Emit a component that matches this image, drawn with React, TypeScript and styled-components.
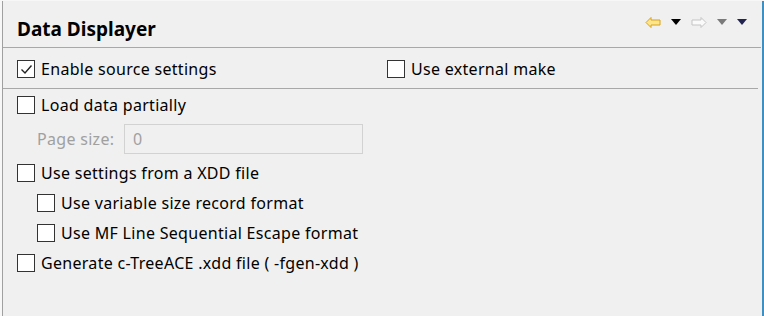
import React from 'react';
import styled, { createGlobalStyle } from 'styled-components';

const GlobalStyle = createGlobalStyle`
    html, body {
        margin: 0;
        padding: 0;
        background: #ffffff;
    }
    body {
        font-family: "Noto Sans", "Open Sans", sans-serif;
    }
`;

const Frame = styled.div`
    width: 764px;
    height: 316px;
    box-sizing: border-box;
    padding: 1px 0 0 2px;
    background: #f7f7f7;
    display: flex;
`;

const Panel = styled.div`
    flex: 1;
    display: flex;
    flex-direction: column;
    background: #f0f0f0;
    border-left: 1px solid #a0a0a0;
    border-right: 2px solid #3f8fc2;
`;

const Header = styled.div`
    height: 46px;
    display: flex;
    align-items: center;
    justify-content: space-between;
    padding: 0 14px 0 14px;
    margin-right: 1px;
    border-bottom: 1px solid #a8a8a8;
`;

const Title = styled.h1`
    margin: 0;
    font-size: 19px;
    font-weight: 700;
    color: #000;
    padding-top: 9px;
`;

const Toolbar = styled.div`
    display: flex;
    align-items: center;
    gap: 10px;
    padding-bottom: 4px;
`;

const Body = styled.div`
    padding: 0 0 0 14px;
    display: flex;
    flex-direction: column;
`;

const TopRow = styled.div`
    display: grid;
    grid-template-columns: 370px 1fr;
    height: 38px;
    padding-top: 2px;
    align-items: center;
    border-bottom: 1px solid #a8a8a8;
    margin-right: 4px;
    margin-left: -14px;
    padding-left: 14px;
`;

const List = styled.div`
    display: flex;
    flex-direction: column;
    padding-top: 1px;
`;

const Row = styled.div<{ indent?: number; h?: number }>`
    display: flex;
    align-items: center;
    height: ${({ h }) => h ?? 30}px;
    padding-left: ${({ indent }) => indent ?? 0}px;
`;

const Box = styled.span`
    width: 18px;
    height: 18px;
    box-sizing: border-box;
    border: 1px solid #333333;
    background: #ffffff;
    display: inline-flex;
    align-items: center;
    justify-content: center;
    flex-shrink: 0;
`;

const Label = styled.span`
    margin-left: 6px;
    font-size: 16px;
    letter-spacing: 0.3px;
    color: #000;
    white-space: nowrap;
`;

const FieldLabel = styled.span`
    width: 107px;
    padding-left: 20px;
    box-sizing: border-box;
    font-size: 16px;
    letter-spacing: 0.3px;
    color: #a0a0a0;
    white-space: nowrap;
`;

const Field = styled.div`
    width: 239px;
    height: 30px;
    box-sizing: border-box;
    border: 1px solid #d2d2d2;
    background: #f0f0f0;
    color: #a0a0a0;
    font-size: 16px;
    display: flex;
    align-items: center;
    padding-left: 8px;
`;

const Check = ({ checked, label }: { checked?: boolean; label: string }) => (
    <>
        <Box>
            {checked && (
                <svg width="13" height="11" viewBox="0 0 13 11">
                    <polyline points="1.5,5.5 5,9 11.5,1.5" fill="none" stroke="#222" strokeWidth="1.4" />
                </svg>
            )}
        </Box>
        <Label>{label}</Label>
    </>
);

const Arrow = ({ dir, fill, stroke }: { dir: 'left' | 'right'; fill: string; stroke: string }) => (
    <svg width="16" height="11" viewBox="0 0 16 11" style={{ transform: dir === 'right' ? 'scaleX(-1)' : undefined }}>
        <polygon points="1,5.5 6,0.5 6,3 15,3 15,8 6,8 6,10.5" fill={fill} stroke={stroke} strokeWidth="1" />
    </svg>
);

const Triangle = ({ color }: { color: string }) => (
    <svg width="10" height="6" viewBox="0 0 10 6">
        <polygon points="0,0 10,0 5,6" fill={color} />
    </svg>
);

const App = (): JSX.Element => {
    return (
        <>
            <GlobalStyle />
            <Frame>
                <Panel>
                    <Header>
                        <Title>Data Displayer</Title>
                        <Toolbar>
                            <Arrow dir="left" fill="#fde58c" stroke="#d7a21c" />
                            <Triangle color="#000000" />
                            <Arrow dir="right" fill="#fafafa" stroke="#c4c4c4" />
                            <Triangle color="#7a7a7a" />
                            <Triangle color="#23234f" />
                        </Toolbar>
                    </Header>
                    <Body>
                        <TopRow>
                            <Row>
                                <Check checked label="Enable source settings" />
                            </Row>
                            <Row>
                                <Check label="Use external make" />
                            </Row>
                        </TopRow>
                        <List>
                            <Row>
                                <Check label="Load data partially" />
                            </Row>
                            <Row h={38}>
                                <FieldLabel>Page size:</FieldLabel>
                                <Field>0</Field>
                            </Row>
                            <Row>
                                <Check label="Use settings from a XDD file" />
                            </Row>
                            <Row indent={20}>
                                <Check label="Use variable size record format" />
                            </Row>
                            <Row indent={20}>
                                <Check label="Use MF Line Sequential Escape format" />
                            </Row>
                            <Row>
                                <Check label="Generate c-TreeACE .xdd file ( -fgen-xdd )" />
                            </Row>
                        </List>
                    </Body>
                </Panel>
            </Frame>
        </>
    );
};

export default App;
